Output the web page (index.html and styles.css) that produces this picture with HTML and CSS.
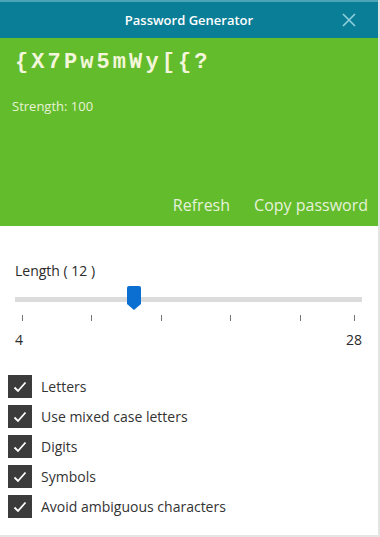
FILE: index.html
```html
<!DOCTYPE html>
<html>
<head>
<meta charset="utf-8">
<link rel="stylesheet" href="styles.css">
</head>
<body>
<div class="window">
  <div class="titlebar">
    <span class="title">Password Generator</span>
    <svg class="close" width="14" height="14" viewBox="0 0 14 14"><path d="M1 1L13 13M13 1L1 13" stroke="#8fd0dc" stroke-width="1.6" fill="none"/></svg>
  </div>
  <div class="hero">
    <div class="password">{X7Pw5mWy[{?</div>
    <div class="strength">Strength: 100</div>
    <div class="actions">
      <span class="action">Refresh</span>
      <span class="action">Copy password</span>
    </div>
  </div>
  <div class="settings">
    <div class="length-label">Length ( 12 )</div>
    <div class="slider">
      <div class="track"></div>
      <svg class="thumb" width="14" height="24" viewBox="0 0 14 24"><path d="M2 0H12Q14 0 14 2V18L7 24L0 18V2Q0 0 2 0Z" fill="#0a6fd1"/></svg>
    </div>
    <div class="ticks">
      <span class="tick"></span><span class="tick"></span><span class="tick"></span><span class="tick"></span><span class="tick"></span><span class="tick"></span>
    </div>
    <div class="range">
      <span>4</span><span>28</span>
    </div>
    <div class="options">
      <div class="option"><span class="box"><svg width="14" height="12" viewBox="0 0 14 12"><path d="M1.5 6.5L5 10L12.5 1.5" stroke="#fff" stroke-width="1.8" fill="none"/></svg></span><span>Letters</span></div>
      <div class="option"><span class="box"><svg width="14" height="12" viewBox="0 0 14 12"><path d="M1.5 6.5L5 10L12.5 1.5" stroke="#fff" stroke-width="1.8" fill="none"/></svg></span><span>Use mixed case letters</span></div>
      <div class="option"><span class="box"><svg width="14" height="12" viewBox="0 0 14 12"><path d="M1.5 6.5L5 10L12.5 1.5" stroke="#fff" stroke-width="1.8" fill="none"/></svg></span><span>Digits</span></div>
      <div class="option"><span class="box"><svg width="14" height="12" viewBox="0 0 14 12"><path d="M1.5 6.5L5 10L12.5 1.5" stroke="#fff" stroke-width="1.8" fill="none"/></svg></span><span>Symbols</span></div>
      <div class="option"><span class="box"><svg width="14" height="12" viewBox="0 0 14 12"><path d="M1.5 6.5L5 10L12.5 1.5" stroke="#fff" stroke-width="1.8" fill="none"/></svg></span><span>Avoid ambiguous characters</span></div>
    </div>
  </div>
</div>
</body>
</html>
```
FILE: styles.css
```css
* { box-sizing: border-box; }
html, body { margin: 0; padding: 0; background: #fff; }
body { font-family: "Open Sans", "Noto Sans", sans-serif; }
.window {
  width: 380px;
  height: 537px;
  display: flex;
  flex-direction: column;
  border-right: 2px solid #e4e4e4;
  border-bottom: 2px solid #e4e4e4;
}
.titlebar {
  height: 38px;
  background: #0b7e97;
  border-top: 2px solid #4aa5b8;
  display: flex;
  align-items: center;
  justify-content: center;
  position: relative;
}
.title {
  color: #fff;
  font-weight: 600;
  font-size: 13px;
}
.close { position: absolute; right: 22px; top: 11px; }
.hero {
  background: #63bc2c;
  height: 188px;
  display: flex;
  flex-direction: column;
  padding: 10px 10px 0 15px;
}
.password {
  font-family: "Liberation Mono", monospace;
  font-weight: bold;
  font-size: 22px;
  letter-spacing: 3.1px;
  color: #f3f6da;
  line-height: 30px;
}
.strength {
  margin: 19px 0 0 -3px;
  font-size: 13px;
  color: #e8f2d6;
  line-height: 18px;
}
.actions {
  margin-top: auto;
  display: flex;
  justify-content: flex-end;
  gap: 24px;
  padding-bottom: 10px;
}
.action {
  font-size: 16px;
  color: #e6f2da;
  line-height: 22px;
}
.settings {
  flex: 1;
  padding: 35px 16px 0 15px;
  display: flex;
  flex-direction: column;
}
.length-label {
  font-size: 14px;
  color: #2a2a2a;
  line-height: 20px;
}
.slider {
  position: relative;
  height: 26px;
  margin-top: 5px;
  display: flex;
  align-items: center;
}
.track {
  width: 100%;
  height: 5px;
  background: #dcdcdc;
}
.thumb { position: absolute; left: 112px; top: 0; }
.ticks {
  display: flex;
  justify-content: space-between;
  padding: 0 7px 0 7px;
  margin-top: 3px;
  height: 8px;
}
.tick { width: 1px; height: 6px; background: #777; }
.tick:last-child { margin-left: -15px; }
.range {
  display: flex;
  justify-content: space-between;
  font-size: 14px;
  color: #2a2a2a;
  margin-top: 8px;
  line-height: 18px;
}
.options {
  margin: 26px 0 0 -7px;
  display: flex;
  flex-direction: column;
  gap: 7px;
}
.option {
  display: flex;
  align-items: center;
  gap: 9px;
  font-size: 14px;
  color: #333;
  height: 23px;
}
.box {
  width: 24px;
  height: 23px;
  background: #3b3b3b;
  display: flex;
  align-items: center;
  justify-content: center;
}
```
